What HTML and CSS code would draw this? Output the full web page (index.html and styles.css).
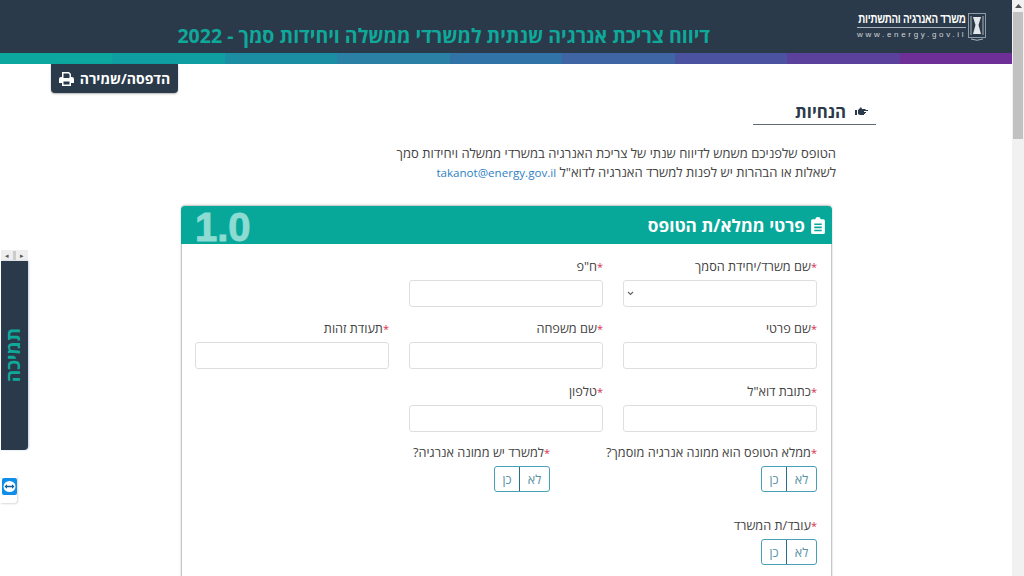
FILE: index.html
```html
<!DOCTYPE html>
<html lang="he" dir="rtl">
<head>
<meta charset="utf-8">
<title>דיווח צריכת אנרגיה</title>
<link rel="stylesheet" href="styles.css">
</head>
<body>
<div class="viewport">
  <main class="page">
    <header class="topbar">
      <div class="logo">
        <svg class="emblem" width="18" height="28" viewBox="0 0 18 28" aria-hidden="true">
          <rect x="0.500" y="0.500" width="17" height="24" fill="none" stroke="#8f9aa4"/>
          <path d="M5 4h8l-2.500 8 2.500 9H5l2.500-9z" fill="#e4e7ea"/>
          <path d="M3 3v19M15 3v19M3 26q6 2.500 12 0" fill="none" stroke="#aab3bb"/>
        </svg>
        <div class="logo-text">
          <div class="logo-name"><span>משרד האנרגיה והתשתיות</span></div>
          <div class="logo-url" dir="ltr">www.energy.gov.il</div>
        </div>
      </div>
      <h1 class="title">דיווח צריכת אנרגיה שנתית למשרדי ממשלה ויחידות סמך - 2022</h1>
    </header>
    <div class="strip">
      <span class="s1"></span><span class="s2"></span><span class="s3"></span><span class="s4"></span><span class="s5"></span><span class="s6"></span><span class="s7"></span><span class="s8"></span><span class="s9"></span>
    </div>
    <div class="tools">
      <button class="print-btn" type="button">
        <span>הדפסה/שמירה</span>
        <svg width="15" height="14" viewBox="0 0 15 14" aria-hidden="true">
          <path d="M3 0h7l2 2v3h1a2 2 0 0 1 2 2v4h-3v3H3v-3H0V7a2 2 0 0 1 2-2h1zM4.500 1.500V6h6V2.500L9.500 1.500zM4.500 9.500v3h6v-3z" fill="#fff" fill-rule="evenodd"/>
        </svg>
      </button>
    </div>
    <section class="content">
      <h2 class="heading">
        <svg width="13" height="10" viewBox="0 0 13 10" aria-hidden="true">
          <path d="M0 3h2v5H0zM3 3l3-3 1 2h3l1 1h2v1H9v1h2v1h-1v1H9v1H5L3 7z" fill="#2b3a4a"/>
        </svg>
        <span>הנחיות</span>
      </h2>
      <p class="intro">הטופס שלפניכם משמש לדיווח שנתי של צריכת האנרגיה במשרדי ממשלה ויחידות סמך<br>לשאלות או הבהרות יש לפנות למשרד האנרגיה לדוא"ל <a href="#">takanot@energy.gov.il</a></p>
      <div class="card">
        <div class="card-head">
          <div class="card-title">
            <svg width="14" height="17" viewBox="0 0 13 16" aria-hidden="true">
              <path d="M4 2a2.500 2 0 0 1 5 0h2.500A1.500 1.500 0 0 1 13 3.500v11a1.500 1.500 0 0 1-1.500 1.500h-10A1.500 1.500 0 0 1 0 14.500v-11A1.500 1.500 0 0 1 1.500 2zM3 6v1.500h7V6zM3 9v1.500h7V9zM3 12v1.500h7V12z" fill="#fff" fill-rule="evenodd"/>
            </svg>
            <span>פרטי ממלא/ת הטופס</span>
          </div>
          <div class="card-num" dir="ltr">1.0</div>
        </div>
        <div class="form-grid">
          <div class="field">
            <label class="lbl"><b>*</b>שם משרד/יחידת הסמך</label>
            <div class="input select"><svg width="7" height="5" viewBox="0 0 7 5" aria-hidden="true"><path d="M1 1l2.500 2.500L6 1" fill="none" stroke="#666" stroke-width="1.200"/></svg></div>
          </div>
          <div class="field">
            <label class="lbl"><b>*</b>ח"פ</label>
            <div class="input"></div>
          </div>
          <div class="field"></div>
          <div class="field">
            <label class="lbl"><b>*</b>שם פרטי</label>
            <div class="input"></div>
          </div>
          <div class="field">
            <label class="lbl"><b>*</b>שם משפחה</label>
            <div class="input"></div>
          </div>
          <div class="field">
            <label class="lbl"><b>*</b>תעודת זהות</label>
            <div class="input"></div>
          </div>
          <div class="field">
            <label class="lbl"><b>*</b>כתובת דוא"ל</label>
            <div class="input"></div>
          </div>
          <div class="field">
            <label class="lbl"><b>*</b>טלפון</label>
            <div class="input"></div>
          </div>
          <div class="field"></div>
          <div class="field">
            <label class="lbl"><b>*</b>ממלא הטופס הוא ממונה אנרגיה מוסמך?</label>
            <div class="toggle"><span>לא</span><span>כן</span></div>
          </div>
          <div class="field field-narrow">
            <label class="lbl"><b>*</b>למשרד יש ממונה אנרגיה?</label>
            <div class="toggle"><span>לא</span><span>כן</span></div>
          </div>
          <div class="field"></div>
          <div class="field">
            <label class="lbl"><b>*</b>עובד/ת המשרד</label>
            <div class="toggle"><span>לא</span><span>כן</span></div>
          </div>
        </div>
      </div>
    </section>
  </main>
  <div class="scrollbar">
    <div class="sb-arrow"><svg width="7" height="4" viewBox="0 0 7 4" aria-hidden="true"><path d="M0 4l3.500-4L7 4z" fill="#555"/></svg></div>
    <div class="sb-thumb"></div>
  </div>
</div>
<aside class="side-tab">
  <div class="side-arrows"><i>◂</i><i class="thumb"></i><i>▸</i></div>
  <div class="side-body"><span>תמיכה</span></div>
</aside>
<div class="tv-badge">
  <svg width="15" height="17" viewBox="0 0 15 17" aria-hidden="true">
    <rect width="15" height="17" rx="2" fill="#0e8ee9"/>
    <ellipse cx="7.500" cy="8.500" rx="6" ry="5.500" fill="#fff"/>
    <path d="M2.500 8.500l2.500-2.200v1.400h5V6.300l2.500 2.200-2.500 2.200V9.300H5v1.400z" fill="#0e5c9c"/>
  </svg>
</div>
</body>
</html>
```
FILE: styles.css
```css
* { box-sizing: border-box; }
html, body { margin: 0; height: 100%; overflow: hidden; background: #fff; }
body { font-family: "Open Sans", "Liberation Sans", sans-serif; color: #444; position: relative; }
.viewport { display: flex; height: 576px; width: 1024px; direction: ltr; }
.page { flex: 1; min-width: 0; overflow: hidden; direction: rtl; }
.topbar { height: 53px; background: #2b3a4a; display: flex; align-items: flex-start; padding-right: 26px; }
.logo { display: flex; align-items: flex-start; gap: 2px; width: 130px; padding-top: 13px; flex: none; }
.emblem { flex: none; }
.logo-text { width: 109px; flex: none; }
.logo-name { height: 15px; border-bottom: 1px solid #aab3bb; white-space: nowrap; font-family: "Liberation Sans", sans-serif; font-size: 12.500px; font-weight: 700; color: #fff; line-height: 13px; }
.logo-name span { display: inline-block; transform: scaleX(.78); transform-origin: right center; letter-spacing: -0.300px; }
.logo-url { font-family: "Liberation Sans", sans-serif; font-size: 8px; color: #cfd4d9; letter-spacing: 2.700px; line-height: 11px; margin-top: 1px; white-space: nowrap; text-align: right; }
.title { margin: 24px 146px 0 0; font-size: 19.500px; font-weight: 700; line-height: 24px; color: #0fa99b; white-space: nowrap; }
.strip { height: 11px; display: flex; direction: ltr; }
.strip span { flex: 1; }
.s1 { background: #0ca8a0; }
.s2 { background: #0f9ea2; }
.s3 { background: #1b8ea3; }
.s4 { background: #2b80a5; }
.s5 { background: #3173a6; }
.s6 { background: #3f65a5; }
.s7 { background: #4b53a0; }
.s8 { background: #5c419c; }
.s9 { background: #6e3096; }
.tools { height: 29px; display: flex; justify-content: flex-end; padding-left: 51px; }
.print-btn { width: 127px; height: 29px; border: 0; border-radius: 0 0 4px 4px; background: #2b3a4a; color: #fff; font: 700 14px "Open Sans", "Liberation Sans", sans-serif; display: flex; align-items: center; justify-content: center; gap: 6px; padding: 0; box-shadow: 0 1px 2px rgba(0,0,0,.3); }
.content { padding: 7px 136px 0 0; }
.heading { margin: 0; width: 123px; height: 25px; border-bottom: 1px solid #5f6b75; display: flex; align-items: center; gap: 9px; padding: 1px 8px 2px 0; font-size: 16.800px; font-weight: 700; color: #2b3a4a; line-height: 20px; }
.intro { margin: 19px 40px 0 0; font-size: 13px; line-height: 19px; color: #444; width: 600px; }
.intro a { color: #2f7fc4; text-decoration: none; font-size: 11.600px; }
.card { margin: 24px 44px 0 0; width: 651px; height: 500px; border: 1px solid #c4c8cb; border-top: 0; border-radius: 4px 4px 0 0; box-shadow: 0 -1px 2px rgba(0,0,0,.25); }
.card-head { height: 38px; background: #07a899; display: flex; justify-content: space-between; align-items: center; padding: 0 7px 0 14px; border-radius: 4px 4px 0 0; margin: 0 -1px; }
.card-title { display: flex; align-items: center; gap: 6px; color: #fff; font-size: 17.200px; font-weight: 700; }
.card-num { font-family: "Liberation Sans", sans-serif; font-size: 40px; font-weight: 700; color: #8ddbd2; line-height: 36px; margin-top: 4px; -webkit-text-stroke: 1px #8ddbd2; }
.form-grid { display: grid; grid-template-columns: repeat(3, 194px); grid-template-rows: 62px 63px 61px 73px 62px; column-gap: 20px; padding: 14px 14px 0; }
.field-narrow { padding-right: 53px; }
.lbl { display: block; font-size: 12.700px; line-height: 17px; color: #444; height: 22px; white-space: nowrap; }
.lbl b { color: #d9304f; font-weight: 400; font-size: 11px; }
.input { height: 27px; border: 1px solid #dcdfe2; border-radius: 3px; background: #fff; }
.select { display: flex; align-items: center; justify-content: flex-end; padding-left: 3px; }
.toggle { width: 56px; height: 26px; display: flex; border: 1px solid #4a9fb8; border-radius: 3px; font-size: 12.500px; color: #5a93a6; }
.toggle span { display: flex; align-items: center; justify-content: center; width: 29px; }
.toggle span + span { flex: 1; width: auto; border-right: 1px solid #23708c; }
.scrollbar { width: 12px; flex: none; background: #f1f1f1; display: flex; flex-direction: column; align-items: center; }
.sb-arrow { height: 12px; display: flex; align-items: center; }
.sb-thumb { width: 10px; height: 127px; background: #c1c1c1; }
.side-tab { position: absolute; left: 1px; top: 250px; width: 27px; direction: ltr; }
.side-arrows { height: 11px; background: #eee; display: flex; justify-content: space-between; align-items: center; font-size: 7px; color: #555; padding: 0 4px; }
.side-arrows i { font-style: normal; }
.side-arrows .thumb { width: 3px; height: 9px; background: #ccc; }
.side-body { height: 189px; background: #2b3a4a; border-radius: 0 0 4px 0; display: flex; align-items: center; justify-content: center; padding-right: 4px; box-shadow: 1px 0 2px rgba(60,110,150,.3); }
.side-body span { direction: rtl; writing-mode: vertical-rl; transform: rotate(180deg); color: #0fa99b; font-size: 19px; font-weight: 700; white-space: nowrap; }
.tv-badge { position: absolute; left: 0; top: 475px; width: 17px; height: 28px; background: #fff; border-radius: 0 3px 3px 0; box-shadow: 1px 1px 2px rgba(0,0,0,.15); padding-top: 3px; }
.tv-badge svg { display: block; }
```
